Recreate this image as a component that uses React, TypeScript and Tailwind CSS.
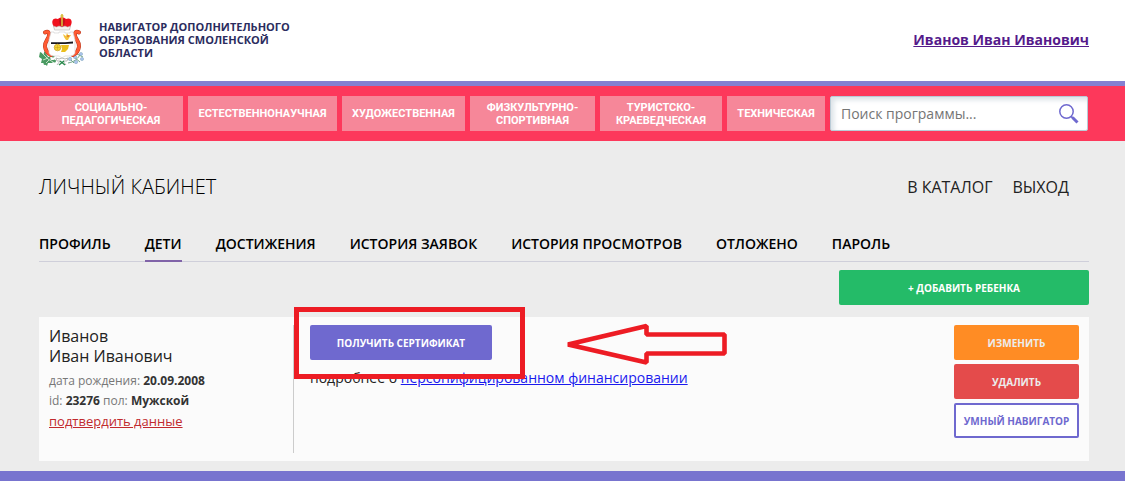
import React from 'react';

const categories = [
  { label: 'Социально-педагогическая', width: 'grow-0 basis-36' },
  { label: 'Естественнонаучная', width: 'grow-0 basis-[149px]' },
  { label: 'Художественная', width: 'grow-0 basis-[123px]' },
  { label: 'Физкультурно-спортивная', width: 'grow-0 basis-[125px]' },
  { label: 'Туристско-краеведческая', width: 'grow-0 basis-[122px]' },
  { label: 'Техническая', width: 'grow-0 basis-[98px]' },
];

const tabs = ['Профиль', 'Дети', 'Достижения', 'История заявок', 'История просмотров', 'Отложено', 'Пароль'];

function CoatOfArms() {
  return (
    <svg viewBox="0 0 46 52" className="h-[52px] w-[46px] shrink-0" role="img" aria-label="Герб Смоленской области">
      {/* oak and flax branches */}
      <g fill="#4a9a62">
        <path d="M1 38l4 2 0-3 3 4 1 2 3-1 0 4 4 0-3 3-4 0-1 3-3-3-3 0 1-4-3-2z" />
        <circle cx="14" cy="42" r="1.600" />
        <circle cx="15.500" cy="47" r="1.500" />
        <circle cx="6" cy="49.500" r="1.500" />
      </g>
      <path d="M3 39l6 6 5 3M4 46l5-2M11 41l1 5M7 49l3-3" stroke="#e4f2df" strokeWidth=".8" fill="none" />
      <path d="M29 49c6-1 10-4 13-10M31 45l4 4M35 43l6 5M38 40l6 3" stroke="#6fa486" strokeWidth="1" fill="none" />
      <g fill="#a9c3ec" stroke="#7da3bb" strokeWidth=".5">
        <circle cx="31" cy="45" r="1.700" />
        <circle cx="36" cy="43" r="1.700" />
        <circle cx="42" cy="40" r="1.600" />
        <circle cx="37" cy="48" r="1.700" />
        <circle cx="43" cy="45" r="1.600" />
      </g>
      {/* scroll ribbons */}
      <g fill="none" strokeLinecap="round">
        <path d="M6 18.500c3-2 4.500 0 4 3-.5 4-4.500 6-4 11 .5 4 3 7 6 8.500" stroke="#b5361c" strokeWidth="4" />
        <path d="M40 18.500c-3-2-4.500 0-4 3 .5 4 4.500 6 4 11-.5 4-3 7-6 8.500" stroke="#b5361c" strokeWidth="4" />
        <path d="M6 18.500c3-2 4.500 0 4 3-.5 4-4.500 6-4 11 .5 4 3 7 6 8.500" stroke="#ff5a33" strokeWidth="3" />
        <path d="M40 18.500c-3-2-4.500 0-4 3 .5 4 4.500 6 4 11-.5 4-3 7-6 8.500" stroke="#ff5a33" strokeWidth="3" />
      </g>
      {/* shield */}
      <path d="M12 18h3v1h5v-1h6v1h5v-1h3l2 8v12c0 3-3 4-6 4h-4l-3 2-3-2h-4c-3 0-6-1-6-4V26z" fill="#fff" stroke="#d6d6d6" strokeWidth=".7" />
      {/* crown */}
      <path d="M14.500 12c-3-5 0-9 4.500-7 1-1 3-2 4-2s3 1 4 2c4.500-2 7.500 2 4.500 7l-1 3H15.500z" fill="#f0101c" />
      <path d="M20.500 5c-1 3 0 6 2.500 8 2.500-2 3.500-5 2.500-8z" fill="#c20f1a" />
      <path d="M23 0v12M21.500 2h3" stroke="#d9bd3a" strokeWidth="1.600" />
      <path d="M14.500 12l3 1 2.500-1 3 1 3-1 2.500 1 3-1-1 4H15.500z" fill="#f5f2ee" stroke="#aaa6a6" strokeWidth=".5" />
      {/* bird and cannon */}
      <path d="M24 20l3 2 1-3 1 2 3 0-2 3-1 2h-2l-2-3z" fill="#f3c23c" />
      <circle cx="29" cy="22" r=".8" fill="#d9431f" />
      <path d="M12 28.200h14l8-.7v2l-8 .5H12z" fill="#17171f" />
      <circle cx="18.500" cy="33.500" r="3.300" fill="#f3d333" stroke="#c79c22" strokeWidth=".7" />
      <path d="M18.500 31v5M16 33.500h5" stroke="#c79c22" strokeWidth=".5" />
      <path d="M22 31h8l-1 4-3 3h-4l1-3z" fill="#ebbf1e" />
      {/* motto ribbon */}
      <path d="M17 44l3 1 3-1 3 1 3-1-1 3h-4l3 4M17 44l1 3h3l-3 4" fill="none" stroke="#b8bbb8" strokeWidth="1" />
      <path d="M20 51l5-4M26 51l-5-4" stroke="#26884a" strokeWidth="1.300" />
    </svg>
  );
}

function SearchIcon() {
  return (
    <svg viewBox="0 0 20 20" className="size-5" fill="none" stroke="#6f69cf" aria-hidden="true">
      <circle cx="7.500" cy="7.500" r="6.700" strokeWidth="1.500" />
      <path d="M12 12.500l2 1.500" strokeWidth="1.800" />
      <path d="M13.500 13.500l5 5" strokeWidth="3" />
    </svg>
  );
}

function ActionButton({ className, children }: { className: string; children: React.ReactNode }) {
  return (
    <button type="button" className={`h-[35px] rounded-xs pt-[2px] text-[10px] font-bold uppercase ${className}`}>
      {children}
    </button>
  );
}

export default function App() {
  return (
    <div className="bg-white font-['Open_Sans',sans-serif] text-black">
      <header className="flex h-[81px] items-center justify-between pr-9 pb-[2px] pl-[39px]">
        <a href="#" className="flex items-center gap-[14px]">
          <CoatOfArms />
          <span className="w-[210px] text-[11px] leading-[13px] font-bold text-[#2b2c5e] uppercase">
            Навигатор дополнительного образования Смоленской области
          </span>
        </a>
        <a href="#" className="text-sm leading-[22px] font-bold text-[#551a8b] underline">
          Иванов Иван Иванович
        </a>
      </header>

      <nav className="flex gap-[5px] border-t-[5px] border-[#8580d2] bg-[#fd385b] py-[10px] pr-[37px] pl-[39px]">
        {categories.map((c) => (
          <a
            key={c.label}
            href="#"
            className={`flex h-[35px] items-center justify-center bg-[#f68799] text-center font-[Roboto,sans-serif] text-[11px] leading-[13px] font-bold text-white uppercase ${c.width}`}
          >
            {c.label}
          </a>
        ))}
        <form className="flex h-[35px] min-w-0 flex-1 items-center rounded-xs border border-[#b9cbd6] bg-white pr-2 pl-[10px] shadow-[inset_3px_3px_5px_#dce3e8]">
          <input
            type="search"
            aria-label="Поиск программы"
            placeholder="Поиск программы..."
            className="min-w-0 flex-1 bg-transparent text-sm outline-none placeholder:text-[#757575]"
          />
          <button type="submit" aria-label="Найти">
            <SearchIcon />
          </button>
        </form>
      </nav>

      <main className="border-b-[10px] border-[#7874cf] bg-[#ececec] pt-8 pr-9 pb-[10px] pl-[39px]">
        <div className="flex h-7 items-center justify-between">
          <h1 className="text-xl font-light uppercase">Личный кабинет</h1>
          <div className="flex gap-5 pr-5 text-base text-[#222] uppercase">
            <a href="#">В каталог</a>
            <a href="#">Выход</a>
          </div>
        </div>

        <div className="mt-[33px] flex h-7 gap-[34px] border-b border-[#cfcfda] text-sm leading-5 font-semibold uppercase">
          {tabs.map((t) => (
            <a key={t} href="#" className={`h-7 ${t === 'Дети' ? 'border-b-2 border-[#8063a8]' : ''}`}>
              {t}
            </a>
          ))}
        </div>

        <div className="mt-2 flex justify-end">
          <ActionButton className="w-[250px] bg-[#24bb68] text-white">+ Добавить ребенка</ActionButton>
        </div>

        <section className="relative mt-3 flex h-36 bg-[#fbfbfb] py-2 pr-[10px] pl-[10px]">
          <div className="w-[245px] border-r border-[#ccc]">
            <h2 className="pt-[1px] text-base leading-5 text-[#222]">
              Иванов
              <br />
              Иван Иванович
            </h2>
            <div className="mt-[5px] text-xs leading-5 text-[#777]">
              <p>
                дата рождения: <b className="text-[#333]">20.09.2008</b>
              </p>
              <p>
                id: <b className="text-[#333]">23276</b> пол: <b className="text-[#333]">Мужской</b>
              </p>
            </div>
            <a href="#" className="block text-[13px] leading-5 text-[#c12a2e] underline">
              подтвердить данные
            </a>
          </div>
          <div className="flex-1 pl-4">
            <ActionButton className="w-[182px] bg-[#6f69cf] text-white">Получить сертификат</ActionButton>
            <p className="mt-2 text-sm leading-5 text-[#222]">
              подробнее о{' '}
              <a href="#" className="text-[#1a1aee] underline">
                персонифицированном финансировании
              </a>
            </p>
          </div>
          <div className="flex w-[125px] flex-col gap-1">
            <ActionButton className="bg-[#ff8c24] text-[#ececec]">Изменить</ActionButton>
            <ActionButton className="bg-[#e44b4b] text-[#ececec]">Удалить</ActionButton>
            <ActionButton className="border-2 border-[#6f69cf] bg-white text-[#6f69cf]">Умный навигатор</ActionButton>
          </div>

          <div className="pointer-events-none absolute -top-[10px] left-[255px] h-[72px] w-[231px] border-[5px] border-[#ed1c24]" />
          <svg
            viewBox="0 0 162 44"
            className="pointer-events-none absolute top-[5px] left-[527px] h-11 w-[162px]"
            fill="none"
            stroke="#ed1c24"
            strokeWidth="4.600"
            strokeLinejoin="bevel"
            aria-hidden="true"
          >
            <path d="M2 22.500L80.500 4V12.500H158.500V31.500H80.500V40.500Z" />
          </svg>
        </section>
      </main>
    </div>
  );
}
